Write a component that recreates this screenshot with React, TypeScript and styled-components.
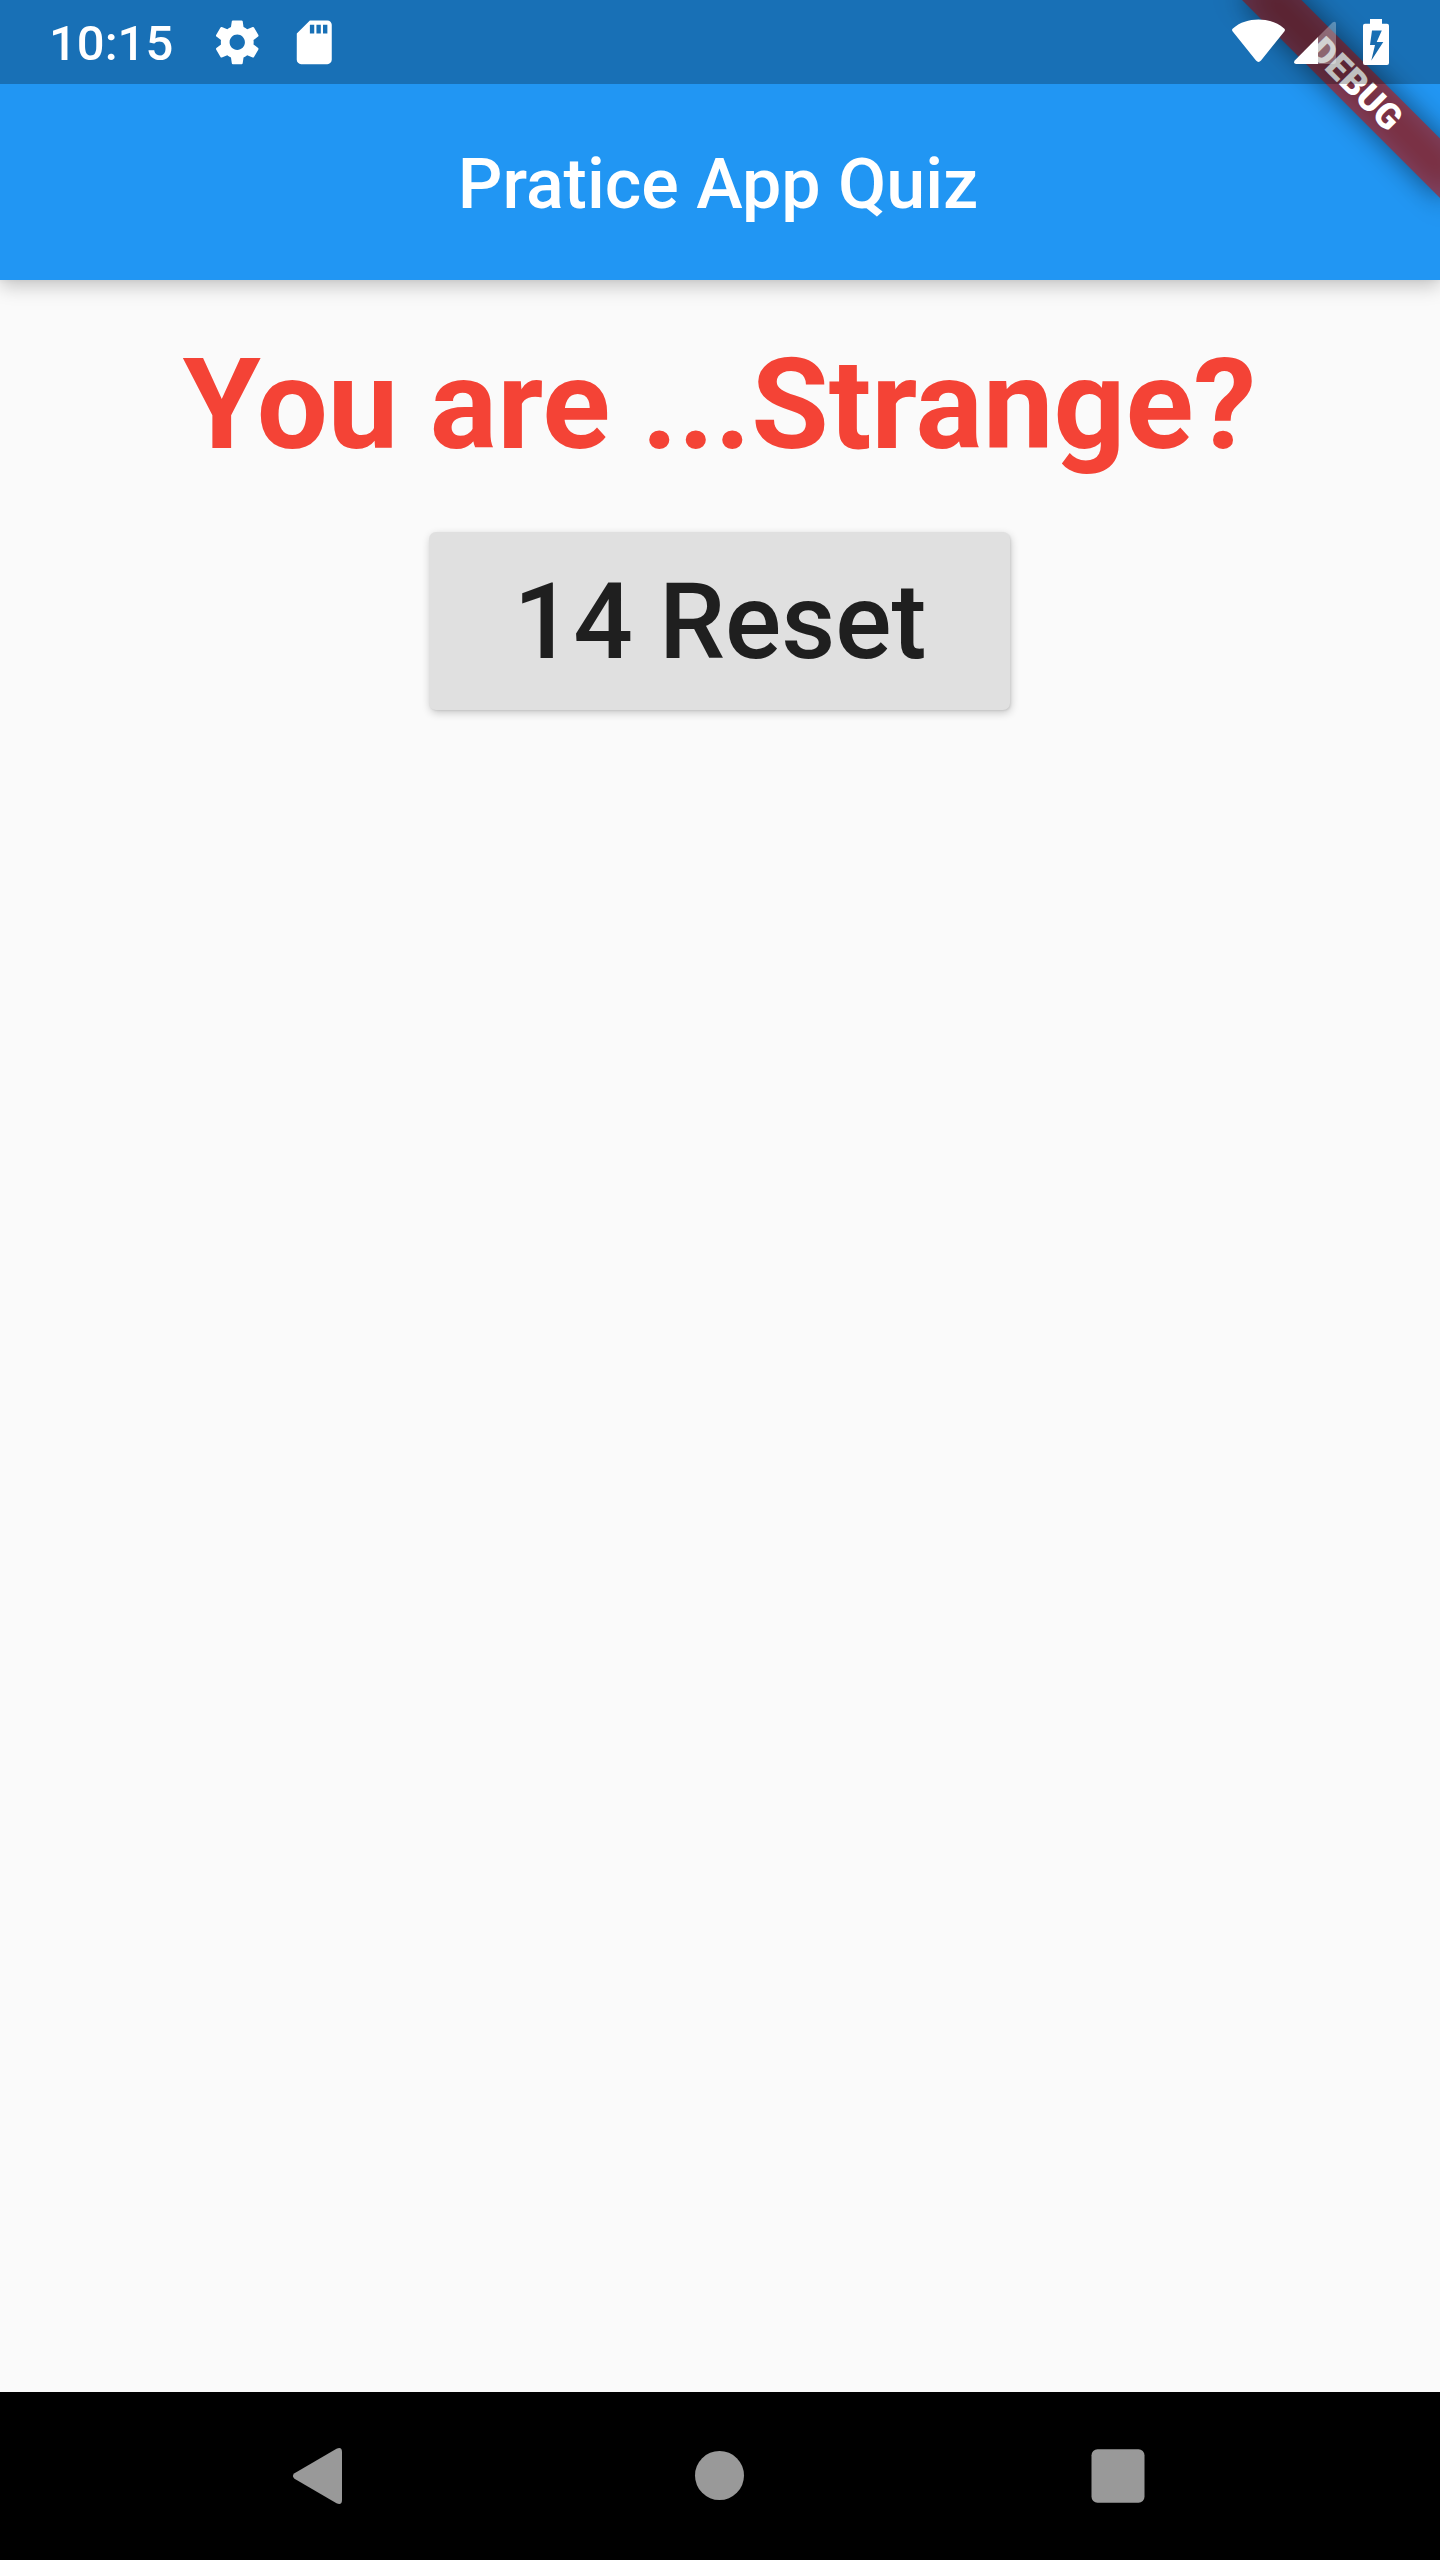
import React from 'react';
import styled, { createGlobalStyle } from 'styled-components';

const GlobalStyle = createGlobalStyle`
  *, *::before, *::after { box-sizing: border-box; }
  body {
    margin: 0;
    background: #fafafa;
    font-family: Roboto, 'Noto Sans', sans-serif;
  }
`;

const Screen = styled.div`
  position: relative;
  display: flex;
  flex-direction: column;
  width: 1440px;
  height: 2560px;
  overflow: hidden;
  background: #fafafa;
`;

const Header = styled.header`
  position: relative;
  z-index: 1;
  flex: none;
  background: #2196f3;
  box-shadow: 0 6px 18px rgba(0, 0, 0, 0.22), 0 1px 5px rgba(0, 0, 0, 0.04);
`;

const StatusBar = styled.div`
  position: relative;
  z-index: 2;
  display: flex;
  align-items: center;
  height: 84px;
  padding: 0 50px 0 49px;
  background: rgba(0, 0, 0, 0.251);
  color: #fff;
`;

const Clock = styled.span`
  width: 125px;
  font-size: 49px;
  font-weight: 500;
  line-height: 84px;
  padding-top: 3px;
`;

const Notifications = styled.div`
  display: flex;
  gap: 24.5px;
  margin-left: 37px;
`;

const Indicators = styled.div`
  display: flex;
  margin-left: auto;
`;

const Icon = styled.svg<{ $w: number; $h: number }>`
  display: block;
  flex: none;
  width: ${(p) => p.$w}px;
  height: ${(p) => p.$h}px;
  fill: currentColor;
`;

const Toolbar = styled.div`
  display: flex;
  align-items: center;
  justify-content: center;
  height: 196px;
`;

const Title = styled.h1`
  margin: 0 4px 0 0;
  padding-top: 4px;
  color: #fff;
  font-size: 70px;
  font-weight: 500;
  line-height: 82px;
  white-space: nowrap;
`;

const BannerClip = styled.div`
  position: absolute;
  inset: 0;
  height: 300px;
  z-index: 1;
  overflow: hidden;
  pointer-events: none;
`;

const BannerAnchor = styled.div`
  position: absolute;
  top: 0;
  right: 0;
  width: 0;
  height: 0;
  transform: rotate(45deg);
  transform-origin: 0 0;
`;

const BannerShadow = styled.div`
  position: absolute;
  left: -140px;
  top: 98px;
  width: 280px;
  height: 42px;
  background: rgba(0, 0, 0, 0.498);
  filter: blur(13.9px);
`;

const BannerRibbon = styled.div`
  position: absolute;
  left: -140px;
  top: 98px;
  width: 280px;
  height: 42px;
  background: rgba(183, 28, 28, 0.627);
  color: #fff;
  font-size: 35.7px;
  font-weight: 900;
  line-height: 42px;
  text-align: center;
`;

const Body = styled.main`
  flex: 1;
  display: flex;
  flex-direction: column;
  align-items: center;
  padding-top: 51px;
`;

const Result = styled.h2`
  margin: 0 1px 0 0;
  color: #f44336;
  font-size: 126px;
  font-weight: 700;
  line-height: 148px;
  white-space: nowrap;
`;

const ResetButton = styled.button`
  display: flex;
  align-items: center;
  justify-content: center;
  width: 581px;
  height: 178px;
  margin: 53px 1px 0 0;
  padding: 3px 0 0 1px;
  border: 0;
  border-radius: 7px;
  background: #e0e0e0;
  box-shadow: 1px 3px 8px rgba(0, 0, 0, 0.2), 1px 1px 2px rgba(0, 0, 0, 0.08);
  color: #1f1f1f;
  font-family: inherit;
  font-size: 105px;
  font-weight: 500;
  line-height: 124px;
  white-space: nowrap;
`;

const NavBar = styled.nav`
  flex: none;
  display: flex;
  justify-content: center;
  gap: 315px;
  height: 168px;
  padding-top: 42px;
  background: #000;
  color: #999;
`;

export default function App() {
  return (
    <Screen>
      <GlobalStyle />
      <Header>
        <StatusBar>
          <Clock>10:15</Clock>
          <Notifications>
            <Icon $w={52.5} $h={52.5} viewBox="0 0 24 24">
              <path d="M19.43 12.98c.04-.32.07-.64.07-.98s-.03-.66-.07-.98l2.11-1.65c.19-.15.24-.42.12-.64l-2-3.46c-.12-.22-.39-.3-.61-.22l-2.49 1c-.52-.4-1.08-.73-1.69-.98l-.38-2.65C14.46 2.18 14.25 2 14 2h-4c-.25 0-.46.18-.49.42l-.38 2.65c-.61.25-1.17.59-1.69.98l-2.49-1c-.23-.09-.49 0-.61.22l-2 3.46c-.13.22-.07.49.12.64l2.11 1.65c-.04.32-.07.65-.07.98s.03.66.07.98l-2.11 1.65c-.19.15-.24.42-.12.64l2 3.46c.12.22.39.3.61.22l2.49-1c.52.4 1.08.73 1.69.98l.38 2.65c.03.24.24.42.49.42h4c.25 0 .46-.18.49-.42l.38-2.65c.61-.25 1.17-.59 1.69-.98l2.49 1c.23.09.49 0 .61-.22l2-3.46c.12-.22.07-.49-.12-.64l-2.11-1.65zM12 15.5c-1.93 0-3.5-1.57-3.5-3.5s1.57-3.5 3.5-3.5 3.5 1.57 3.5 3.5-1.57 3.5-3.5 3.5z" />
            </Icon>
            <Icon $w={52.5} $h={52.5} viewBox="0 0 24 24">
              <path d="M18 2h-8L4.02 8 4 20c0 1.1.9 2 2 2h12c1.1 0 2-.9 2-2V4c0-1.1-.9-2-2-2zm-6 6h-2V4h2v4zm3 0h-2V4h2v4zm3 0h-2V4h2v4z" />
            </Icon>
          </Notifications>
          <Indicators>
            <Icon $w={60} $h={84} viewBox="1230 0 60 84">
              <path d="M1232.5 31.2Q1231.3 29.5 1233.2 28.2C1240 22.3 1249 19.5 1258.5 19.5S1277 22.3 1283.8 28.2Q1285.7 29.5 1284.5 31.2L1261 60.6Q1258.5 63.2 1256 60.6Z" />
            </Icon>
            <Icon $w={60} $h={84} viewBox="1290 0 60 84">
              <path fillOpacity="0.3" d="M1318 37L1332.5 22.5Q1336 20.5 1336 24V61.5Q1336 64 1333.5 64H1318Z" />
              <path d="M1318 37V64H1296Q1293 63.5 1294.5 60.8Z" />
            </Icon>
            <Icon $w={40} $h={84} viewBox="1350 0 40 84">
              <path
                fillRule="evenodd"
                d="M1370 19H1382V23.7H1387Q1389 23.7 1389 25.7V63Q1389 65 1387 65H1365Q1363 65 1363 63V25.7Q1363 23.7 1365 23.7H1370ZM1372 30.5L1370 45H1375L1371.3 60.5L1383.3 42H1376.7L1381.8 30.5Z"
              />
            </Icon>
          </Indicators>
        </StatusBar>
        <Toolbar>
          <Title>Pratice App Quiz</Title>
        </Toolbar>
        <BannerClip>
          <BannerAnchor>
            <BannerShadow />
            <BannerRibbon>DEBUG</BannerRibbon>
          </BannerAnchor>
        </BannerClip>
      </Header>
      <Body>
        <Result>You are ...Strange?</Result>
        <ResetButton type="button">14 Reset</ResetButton>
      </Body>
      <NavBar>
        <Icon $w={84} $h={84} viewBox="279 2434 84 84">
          <path d="M294.5 2473.3L336.5 2448.8Q342 2446.5 342 2452V2500Q342 2505.5 336.5 2503.2L294.5 2478.7Q291.3 2476 294.5 2473.3Z" />
        </Icon>
        <Icon $w={84} $h={84} viewBox="678 2434 84 84">
          <circle cx="719.5" cy="2475.5" r="24.5" />
        </Icon>
        <Icon $w={84} $h={84} viewBox="1077 2434 84 84">
          <rect x="1091.5" y="2449.3" width="53" height="53.4" rx="6" />
        </Icon>
      </NavBar>
    </Screen>
  );
}
